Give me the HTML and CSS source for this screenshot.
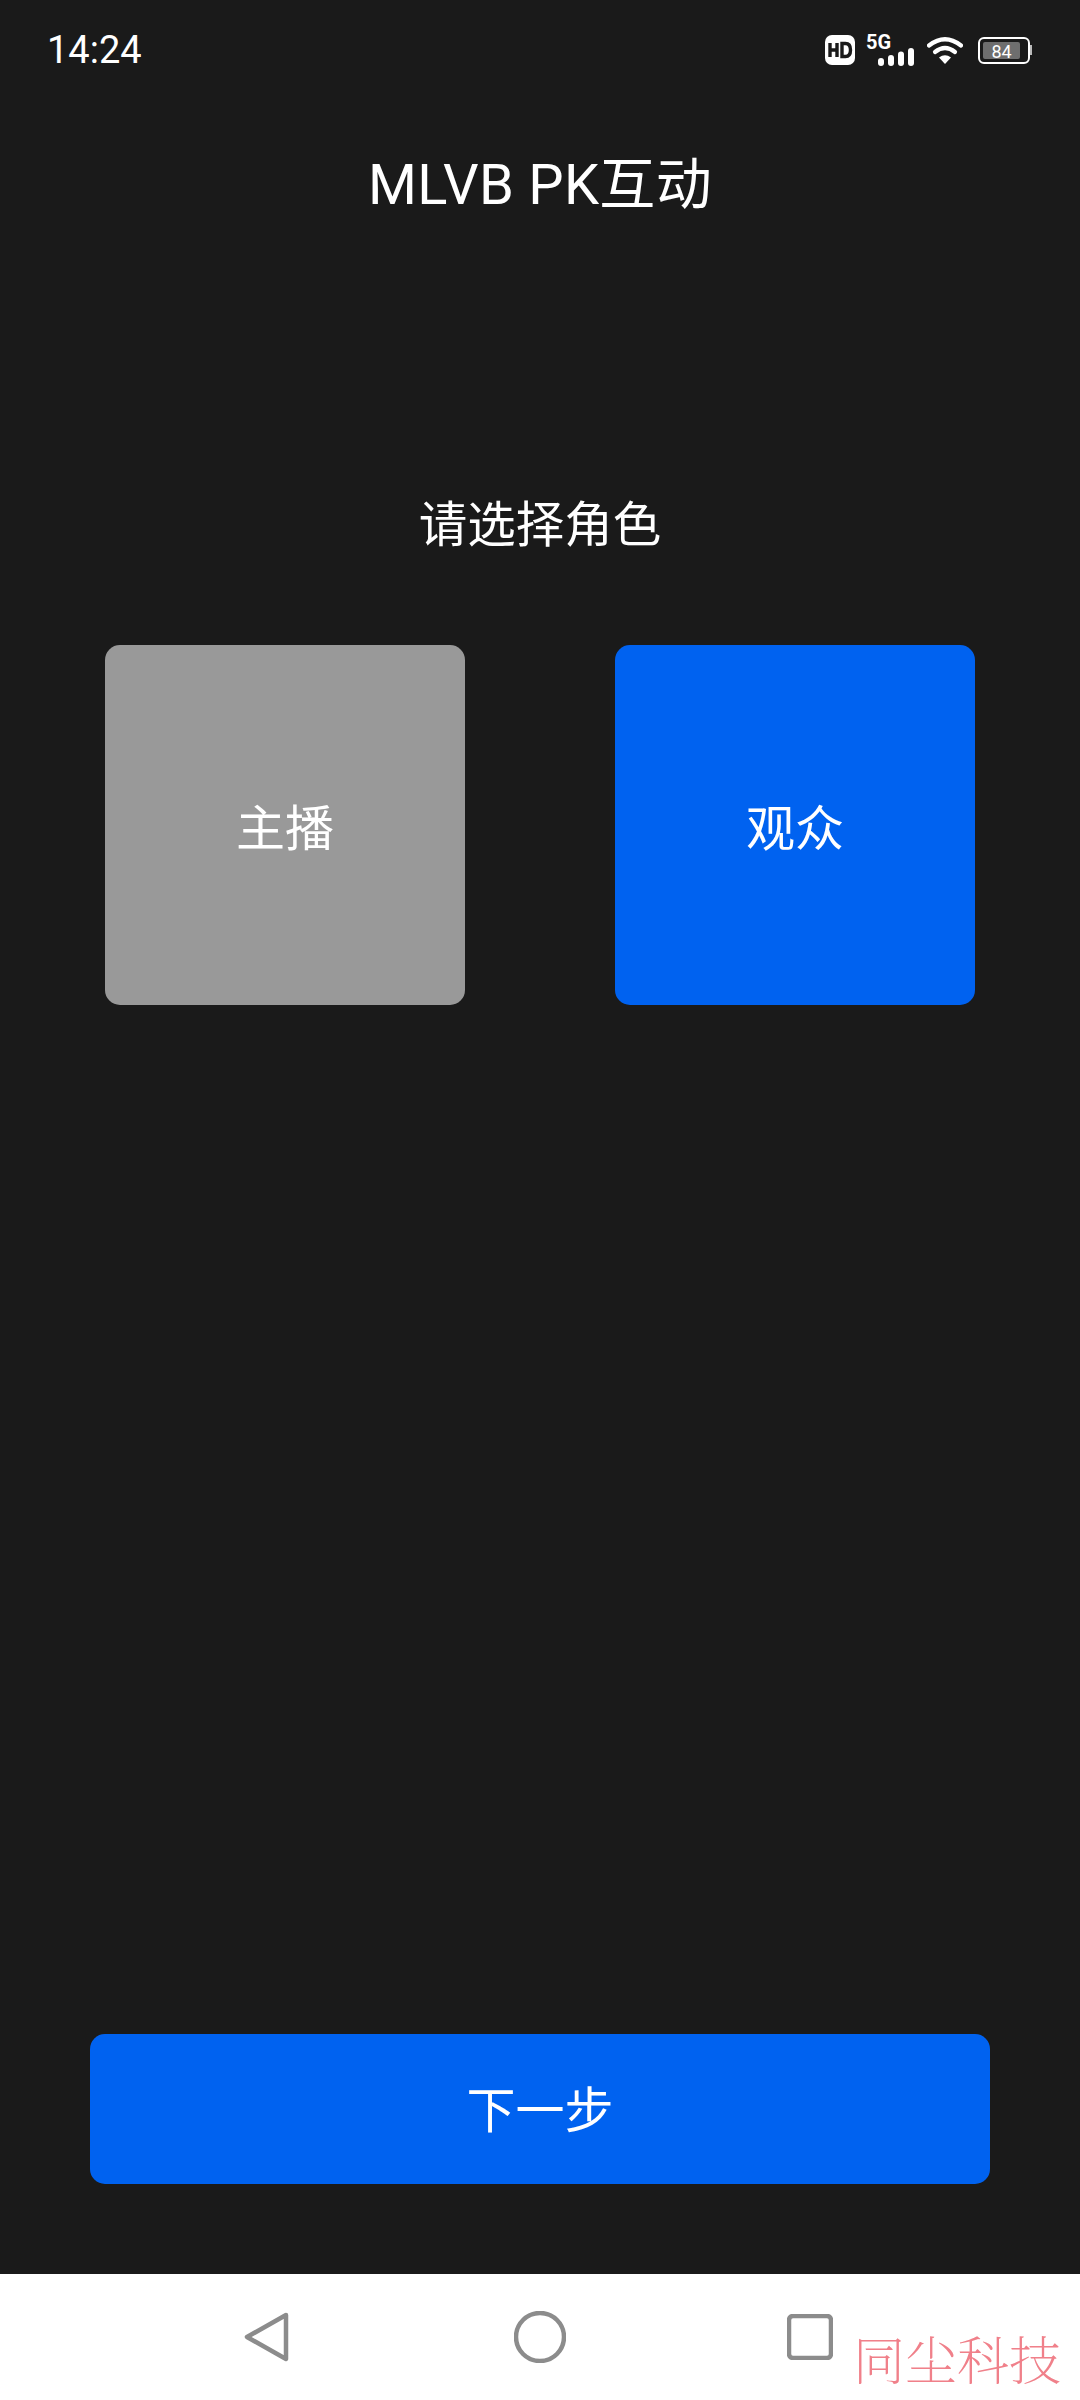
FILE: index.html
```html
<!DOCTYPE html>
<html>
<head>
    <meta charset="utf-8">
    <link rel="stylesheet" href="styles.css">
    <title>MLVB PK互动</title>
</head>
<body>
    <div class="app">
        <div class="status-bar">
            <span class="time">14:24</span>
            <div class="status-icons">
                <svg class="ic-hd" width="30" height="30" viewBox="0 0 30 30">
                    <rect width="30" height="30" rx="7" fill="#fff"/>
                    <path d="M5 8v14M12 8v14M5 15h7" stroke="#1a1a1a" stroke-width="3.4" fill="none"/>
                    <path d="M17 8.500h3.500q5 0 5 6.500t-5 6.500H17z" stroke="#1a1a1a" stroke-width="3.400" fill="none"/>
                </svg>
                <div class="ic-signal">
                    <span class="net">5G</span>
                    <svg width="36" height="18" viewBox="0 0 36 18">
                        <rect x="0" y="10" width="6" height="8" rx="3" fill="#fff"/>
                        <rect x="10" y="7" width="6" height="11" rx="3" fill="#fff"/>
                        <rect x="20" y="3.500" width="6" height="14.500" rx="3" fill="#fff"/>
                        <rect x="30" y="0" width="6" height="18" rx="3" fill="#fff"/>
                    </svg>
                </div>
                <svg class="ic-wifi" width="36" height="28" viewBox="0 0 36 28">
                    <path d="M2 9.500Q18 -3 34 9.500" stroke="#fff" stroke-width="4.200" fill="none" stroke-linecap="round"/>
                    <path d="M8 16Q18 8 28 16" stroke="#fff" stroke-width="4.200" fill="none" stroke-linecap="round"/>
                    <path d="M12 21.500Q18 17 24 21.500L18 28z" fill="#fff"/>
                </svg>
                <div class="ic-battery">
                    <div class="battery-body">
                        <div class="battery-level">84</div>
                    </div>
                    <div class="battery-cap"></div>
                </div>
            </div>
        </div>

        <h1 class="title">MLVB PK互动</h1>
        <h2 class="subtitle">请选择角色</h2>

        <div class="roles">
            <div class="role role-off">主播</div>
            <div class="role role-on">观众</div>
        </div>

        <div class="next-wrap">
            <div class="btn-next">下一步</div>
        </div>

        <div class="nav-bar">
            <svg width="45" height="50" viewBox="0 0 45 50">
                <path d="M42 3L3 25L42 47z" stroke="#8c8c8c" stroke-width="4.500" fill="none" stroke-linejoin="round"/>
            </svg>
            <svg class="ic-home" width="52" height="52" viewBox="0 0 52 52">
                <circle cx="26" cy="26" r="24" stroke="#8c8c8c" stroke-width="4.500" fill="none"/>
            </svg>
            <svg width="46" height="46" viewBox="0 0 46 46">
                <rect x="2" y="2" width="42" height="42" rx="4" stroke="#8c8c8c" stroke-width="4.500" fill="none"/>
            </svg>
            <span class="watermark">同尘科技</span>
        </div>
    </div>
</body>
</html>
```
FILE: styles.css
```css
html, body{
    margin: 0;
    padding: 0;
}

body{
    width: 1080px;
    height: 2400px;
    overflow: hidden;
    background-color: #1a1a1a;
    color: #fff;
    font-family: "Roboto", "Noto Sans CJK SC", sans-serif;
}

.app{
    position: relative;
    display: flex;
    flex-direction: column;
    height: 2400px;
}

.status-bar{
    display: flex;
    justify-content: space-between;
    align-items: center;
    height: 100px;
    padding: 0 48px 0 47px;
    box-sizing: border-box;
}

.time{
    font-size: 38px;
    color: #fff;
}

.status-icons{
    display: flex;
    align-items: center;
}

.ic-signal{
    width: 48px;
    height: 32px;
    margin-left: 11px;
    position: relative;
}

.ic-signal svg{
    position: absolute;
    right: 0;
    bottom: 0;
}

.net{
    position: absolute;
    left: 0;
    top: -4px;
    font-size: 20px;
    font-weight: 700;
    line-height: 24px;
}

.ic-wifi{
    margin-left: 13px;
}

.ic-battery{
    display: flex;
    align-items: center;
    margin-left: 15px;
}

.battery-body{
    width: 52px;
    height: 27px;
    border: 2px solid #fff;
    border-radius: 6px;
    padding: 3px;
    box-sizing: border-box;
    display: flex;
}

.battery-level{
    width: 37px;
    background-color: #6e6e6e;
    border-radius: 2px;
    font-size: 18px;
    line-height: 19px;
    text-align: center;
}

.battery-cap{
    width: 2px;
    height: 10px;
    background-color: #bbb;
}

.title{
    margin: 53px 0 0;
    height: 64px;
    line-height: 64px;
    font-size: 56px;
    font-weight: 400;
    letter-spacing: 0.3px;
    text-align: center;
}

.subtitle{
    margin: 277px 0 0;
    height: 64px;
    line-height: 64px;
    font-size: 48.500px;
    font-weight: 400;
    text-align: center;
}

.roles{
    display: flex;
    justify-content: space-between;
    margin-top: 87px;
    padding: 0 105px;
}

.role{
    display: flex;
    justify-content: center;
    align-items: center;
    width: 360px;
    height: 360px;
    padding-bottom: 2px;
    box-sizing: border-box;
    border-radius: 15px;
    font-size: 49px;
}

.role-off{
    background-color: #999999;
}

.role-on{
    background-color: #0062f0;
}

.next-wrap{
    flex: 1;
    display: flex;
    align-items: flex-end;
    padding: 0 90px 90px;
}

.btn-next{
    width: 100%;
    height: 150px;
    line-height: 156px;
    border-radius: 15px;
    background-color: #0062f0;
    font-size: 49px;
    text-align: center;
}

.nav-bar{
    position: relative;
    display: flex;
    justify-content: space-between;
    align-items: center;
    height: 126px;
    padding: 0 247px 0 244px;
    background-color: #fff;
    box-sizing: border-box;
}

.ic-home{
    margin-left: 4px;
}

.watermark{
    position: absolute;
    left: 853px;
    top: 56px;
    font-family: "Noto Serif CJK SC", "Noto Sans CJK SC", sans-serif;
    font-size: 52px;
    font-weight: 100;
    line-height: 56px;
    color: #f0808a;
    white-space: nowrap;
}
```
